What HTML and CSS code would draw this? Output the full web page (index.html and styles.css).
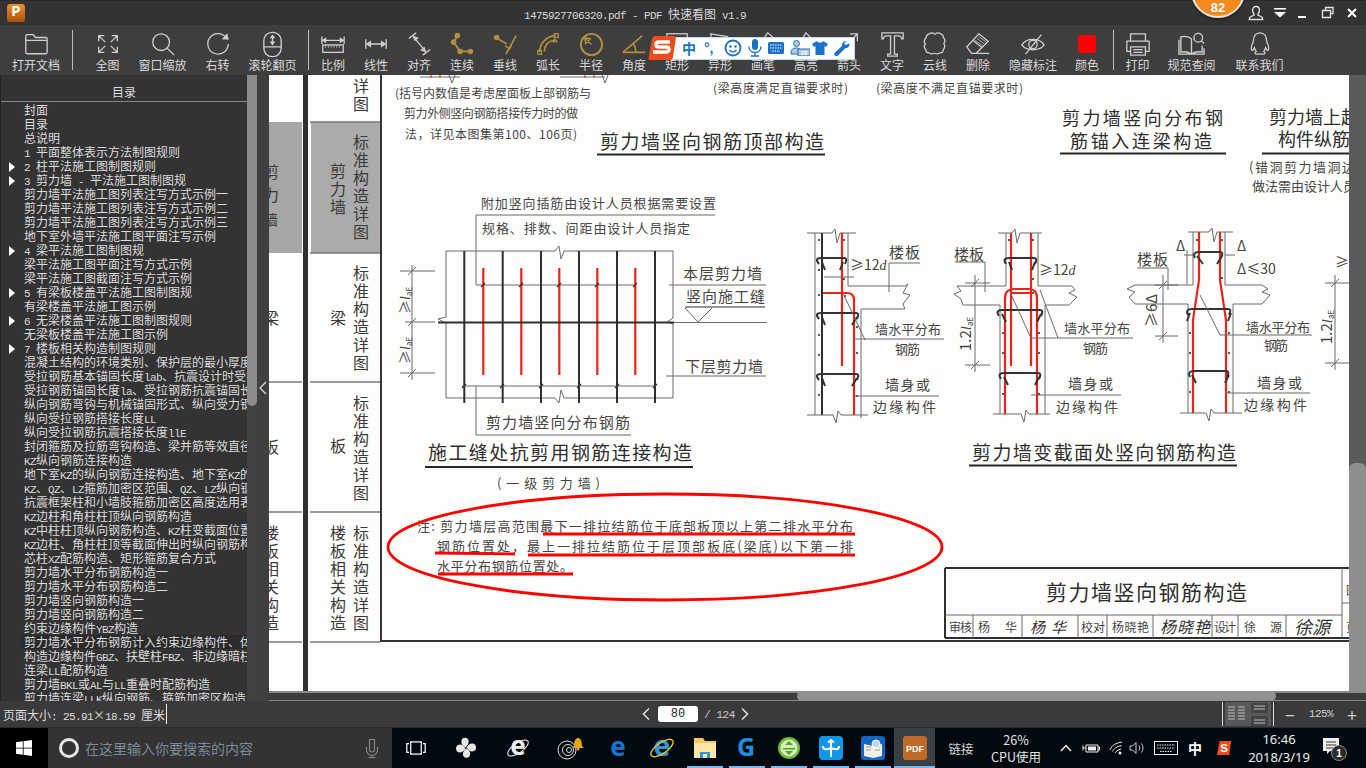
FILE: index.html
```html
<!DOCTYPE html>
<html lang="zh-CN">
<head>
<meta charset="utf-8">
<title>PDF 快速看图</title>
<link rel="stylesheet" href="styles.css">
</head>
<body>
<div class="app">
  <header class="titlebar">
    <div class="logo">P</div>
    <div class="title"><span class="lat">1475927706320.pdf - PDF </span>快速看图<span class="lat"> v1.9</span></div>
    <div class="winctl">
      <svg class="wi wi-user" viewBox="0 0 16 16"><path d="M8 1.500c2.200 0 3.400 1.700 3.400 3.800 0 1.600-.7 2.900-1.500 3.700v1.200l4 1.800c.6.300.8.800.8 2.500H1.300c0-1.700.2-2.200.8-2.500l4-1.800V9C5.300 8.200 4.600 6.900 4.600 5.300 4.600 3.200 5.800 1.500 8 1.500z"/></svg>
      <svg class="wi wi-menu" viewBox="0 0 14 14"><path class="solid" d="M1 2h12v1.500H1zM1 6h12L7 11.500z"/></svg>
      <svg class="wi wi-min" viewBox="0 0 14 14"><path class="solid" d="M2 10h8v2H2z"/></svg>
      <svg class="wi wi-max" viewBox="0 0 14 14"><path d="M4.500 4V1.500h7.500v6H9.500M1.500 4.500h8v7h-8z"/></svg>
      <svg class="wi wi-close" viewBox="0 0 14 14"><path class="bold" d="M3 3l8 8M11 3l-8 8"/></svg>
    </div>
  </header>

  <nav class="toolbar">
    <div class="tool t-open"><svg class="ic" viewBox="0 0 28 28"><path d="M3 8.500V5.500c0-1 .5-1.500 1.500-1.500h6.500l2.500 3h11c1 0 1.500.5 1.500 1.500V23c0 1-.5 1.500-1.500 1.500h-19C3.500 24.500 3 24 3 23zM3 10h23"/></svg><span>打开文档</span></div>
    <i class="sep"></i>
    <div class="group g-first">
      <div class="tool t-55"><svg class="ic" viewBox="0 0 28 28"><path d="M10 5H4v6M4 5l7 7M18 5h6v6M24 5l-7 7M10 23H4v-6M4 23l7-7M18 23h6v-6M24 23l-7-7"/></svg><span>全图</span></div>
      <div class="tool t-55"><svg class="ic" viewBox="0 0 28 28"><circle cx="12" cy="12" r="9"/><path d="M18.500 18.500L26 26"/></svg><span>窗口缩放</span></div>
      <div class="tool t-55"><svg class="ic" viewBox="0 0 28 28"><path d="M23 7.500A11 11 0 1 0 25 14"/><path class="fill" d="M18 9l7.500 .5L24 2.500z"/></svg><span>右转</span></div>
      <div class="tool t-55"><svg class="ic ic-w" viewBox="0 0 28 28"><rect x="5" y="1.500" width="18" height="25" rx="8.500"/><path d="M5 16.500h18M14 5v9"/><path class="fill" d="M11 7.500h6L14 3.500zM11 11h6l-3 4z"/></svg><span>滚轮翻页</span></div>
    </div>
    <i class="sep sep-2"></i>
    <div class="group g-mid">
      <div class="tool"><svg class="ic" viewBox="0 0 28 28"><path d="M2 6v8M26 6v8M3 10h22M3 10l3-2v4zM25 10l-3-2v4z"/><rect x="3" y="15" width="22" height="8"/><path class="thin" d="M6 15v3M9 15v3M12 15v3M15 15v3M18 15v3M21 15v3"/></svg><span>比例</span></div>
      <div class="tool"><svg class="ic" viewBox="0 0 28 28"><path d="M3 9v10M25 9v10M4 14h20M4 14l4-2.500v5zM24 14l-4-2.500v5z"/></svg><span>线性</span></div>
      <div class="tool"><svg class="ic" viewBox="0 0 28 28"><path d="M3 8l8-6M18 26l8-6M8 6l13 16M8 6l4.500 1.500L9.500 10zM21 22l-4.500-1.500L19.500 18z"/></svg><span>对齐</span></div>
      <div class="tool gold"><svg class="ic" viewBox="0 0 28 28"><circle class="fill" cx="5" cy="12" r="3"/><circle class="fill" cx="9" cy="5" r="3"/><circle class="fill" cx="12" cy="22" r="3"/><circle class="fill" cx="23" cy="22" r="3"/><path stroke-width="2" d="M9 5L5 12l7 10h11"/></svg><span>连续</span></div>
      <div class="tool gold"><svg class="ic" viewBox="0 0 28 28"><path stroke-width="1.800" d="M4 7l12 7M26 5L15 25M14 16l5 3 2-4"/><circle class="fill" cx="5" cy="7" r="3"/></svg><span>垂线</span></div>
      <div class="tool gold"><svg class="ic" viewBox="0 0 28 28"><path stroke-width="1.800" d="M5 23C5 13 12 6 22 5M10 22c0-6 4-11 10-12M20 13l1-4 3 3"/><rect x="3" y="21" width="4" height="4"/><rect x="21" y="3" width="4" height="4"/></svg><span>弧长</span></div>
      <div class="tool gold"><svg class="ic ic-w" viewBox="0 0 28 28"><circle cx="14" cy="14" r="11" stroke-width="2"/><path d="M14 14L7 7M7 7l6 1-5 5z"/></svg><span>半径</span></div>
      <div class="tool gold"><svg class="ic" viewBox="0 0 28 28"><path stroke-width="1.800" d="M2 23h24M2 23L23 5M13 13c2 3 3 6 3 10"/></svg><span>角度</span></div>
      <div class="tool"><svg class="ic" viewBox="0 0 28 28"><rect x="3" y="3" width="22" height="18"/></svg><span>矩形</span></div>
      <div class="tool"><svg class="ic" viewBox="0 0 28 28"><path d="M4 3l18 3 3 14-19 2z"/></svg><span>异形</span></div>
      <div class="tool"><svg class="ic" viewBox="0 0 28 28"><path d="M6 24l3-8 10-14 5 4-11 14z"/></svg><span>画笔</span></div>
      <div class="tool"><svg class="ic" viewBox="0 0 28 28"><path d="M14 2l6 6-8 10-5-5z"/></svg><span>高亮</span></div>
      <div class="tool"><svg class="ic" viewBox="0 0 28 28"><path d="M5 23L23 3M15 3h8v8"/></svg><span>箭头</span></div>
      <div class="tool"><svg class="ic ic-w" viewBox="0 0 28 28"><path d="M3 2h22v6h-1.500c-.5-2-1.500-3-3-3H16v19h3v2H9v-2h3V5H7.500c-1.500 0-2.500 1-3 3H3z"/></svg><span>文字</span></div>
      <div class="tool"><svg class="ic" viewBox="0 0 28 28"><path d="M8 3c2-1.500 4-1 6 .5 2-1.500 4-2 6-.5 2 .5 3 2 3 4 2 2 2 4.500.5 6.500 1.500 2 1 4.500-.5 6.500 0 2-1.500 3.500-3.500 3.500-2 1.500-4 1.500-6 .5-2 1-4 1-6-.5-2 0-3.500-1.500-3.500-3.500C2.500 18.500 2 16 3.500 14 2 12 2.500 9 4.500 7 4.500 5 6 3.500 8 3z"/></svg><span>云线</span></div>
      <div class="tool"><svg class="ic" viewBox="0 0 28 28"><path d="M2 17L15 3l10 8-13 13H7zM8.500 10l10 8M13 24h13"/><path class="thin" d="M11 10l8 6M13 8l8 6M15 6l8 6"/></svg><span>删除</span></div>
    </div>
    <div class="tool t-67"><svg class="ic" viewBox="0 0 28 28"><path d="M2 15c5-8 19-8 24 0-5 7-19 7-24 0z"/><circle cx="14" cy="14.500" r="4.500"/><path d="M6 25L23 4"/></svg><span>隐藏标注</span></div>
    <div class="tool t-41"><div class="swatch"></div><span>颜色</span></div>
    <i class="sep sep-3"></i>
    <div class="tool t-48"><svg class="ic" viewBox="0 0 28 28"><path d="M6 11V3h16v8M6 22H2V11h24v11h-4M6 17h16v9H6zM9 20h10M9 23h10"/></svg><span>打印</span></div>
    <div class="tool t-60"><svg class="ic ic-w" viewBox="0 0 28 28"><path d="M14 8c-3-2-7-3-11-2v16c4-1 8 0 11 2 3-2 7-3 11-2V15M14 8v16M1 9v15h26v-6"/><circle cx="21" cy="7" r="4.500"/><path d="M24 10l3 3"/></svg><span>规范查阅</span></div>
    <div class="tool t-76"><svg class="ic" viewBox="0 0 28 28"><path d="M14 2c5 0 7 4 7 8 0 2 1 3 2 6 1 4 0 6-2 4l-1-2c-.5 2-1 3-2 4 2 1 2 3-1 3-2 0-3 0-3-1 0 1-1 1-3 1-3 0-3-2-1-3-1-1-1.500-2-2-4l-1 2c-2 2-3 0-2-4 1-3 2-4 2-6 0-4 2-8 7-8z"/></svg><span>联系我们</span></div>
  </nav>

  <main class="main">
    <aside class="toc">
      <div class="toc-panel">
        <div class="toc-head">目录</div>
        <ul class="toc-list">
          <li>封面</li>
          <li>目录</li>
          <li>总说明</li>
          <li><span class="lat">1 </span>平面整体表示方法制图规则</li>
          <li class="exp"><span class="lat">2 </span>柱平法施工图制图规则</li>
          <li class="exp"><span class="lat">3 </span>剪力墙<span class="lat"> - </span>平法施工图制图规</li>
          <li>剪力墙平法施工图列表注写方式示例一</li>
          <li>剪力墙平法施工图列表注写方式示例二</li>
          <li>剪力墙平法施工图列表注写方式示例三</li>
          <li>地下室外墙平法施工图平面注写示例</li>
          <li class="exp"><span class="lat">4 </span>梁平法施工图制图规</li>
          <li>梁平法施工图平面注写方式示例</li>
          <li>梁平法施工图截面注写方式示例</li>
          <li class="exp"><span class="lat">5 </span>有梁板楼盖平法施工图制图规</li>
          <li>有梁楼盖平法施工图示例</li>
          <li class="exp"><span class="lat">6 </span>无梁楼盖平法施工图制图规则</li>
          <li>无梁板楼盖平法施工图示例</li>
          <li class="exp"><span class="lat">7 </span>楼板相关构造制图规则</li>
          <li>混凝土结构的环境类别、保护层的最小厚度</li>
          <li>受拉钢筋基本锚固长度<span class="lat">lab</span>、抗震设计时受拉钢筋</li>
          <li>受拉钢筋锚固长度<span class="lat">la</span>、受拉钢筋抗震锚固长度</li>
          <li>纵向钢筋弯钩与机械锚固形式、纵向受力钢筋</li>
          <li>纵向受拉钢筋搭接长度<span class="lat">LL</span></li>
          <li>纵向受拉钢筋抗震搭接长度<span class="lat">llE</span></li>
          <li>封闭箍筋及拉筋弯钩构造、梁并筋等效直径</li>
          <li><span class="lat">KZ</span>纵向钢筋连接构造</li>
          <li>地下室<span class="lat">KZ</span>的纵向钢筋连接构造、地下室<span class="lat">KZ</span>的</li>
          <li><span class="lat">KZ</span>、<span class="lat">QZ</span>、<span class="lat">LZ</span>箍筋加密区范围、<span class="lat">QZ</span>、<span class="lat">LZ</span>纵向钢筋</li>
          <li>抗震框架柱和小墙肢箍筋加密区高度选用表</li>
          <li><span class="lat">KZ</span>边柱和角柱柱顶纵向钢筋构造</li>
          <li><span class="lat">KZ</span>中柱柱顶纵向钢筋构造、<span class="lat">KZ</span>柱变截面位置</li>
          <li><span class="lat">KZ</span>边柱、角柱柱顶等截面伸出时纵向钢筋构造</li>
          <li>芯柱<span class="lat">XZ</span>配筋构造、矩形箍筋复合方式</li>
          <li>剪力墙水平分布钢筋构造一</li>
          <li>剪力墙水平分布钢筋构造二</li>
          <li>剪力墙竖向钢筋构造一</li>
          <li>剪力墙竖向钢筋构造二</li>
          <li>约束边缘构件<span class="lat">YBZ</span>构造</li>
          <li class="hover">剪力墙水平分布钢筋计入约束边缘构件、体积</li>
          <li>构造边缘构件<span class="lat">GBZ</span>、扶壁柱<span class="lat">FBZ</span>、非边缘暗柱</li>
          <li>连梁<span class="lat">LL</span>配筋构造</li>
          <li>剪力墙<span class="lat">BKL</span>或<span class="lat">AL</span>与<span class="lat">LL</span>重叠时配筋构造</li>
          <li>剪力墙连梁<span class="lat">LLK</span>纵向钢筋、箍筋加密区构造</li>
        </ul>
      </div>
      <div class="toc-scroll"><div class="toc-thumb"></div></div>
      <div class="toc-gutter"><svg class="chev" viewBox="0 0 8 14"><path d="M7 1L1 7l6 6"/></svg></div>
    </aside>

    <section class="doc">
      <div class="doc-top">
        <svg class="sheet" viewBox="269 75 1080 616" width="1080" height="616">
          <rect x="269" y="75" width="1080" height="616" fill="#fff"/>
          <rect x="308" y="75" width="1041" height="616" fill="#fdfdfc"/>

          <!-- previous page strip -->
          <rect x="269" y="122" width="33" height="131" fill="#a6a6a6"/>
          <path class="ln2" d="M269 382h33M269 512h33M269 642h33"/>
          <text class="v f16" x="271" y="164">剪</text>
          <text class="v f16" x="271" y="187">力</text>
          <text class="v f14" x="271" y="213">墙</text>
          <text class="v f16" x="271" y="310">梁</text>
          <text class="v f16" x="271" y="439">板</text>
          <text class="v f16" x="271" y="525">楼板相关构造</text>
          <rect x="303" y="75" width="5" height="616" fill="#303030"/>

          <!-- section tabs -->
          <rect x="311" y="122" width="69" height="131" fill="#ababab"/>
          <path class="ln2" d="M310 122h70M310 253h70M310 382h70M310 512h70M310 642h70"/>
          <path class="frame" d="M381 75v566h968"/>
          <text class="v f16" x="361" y="78">详图</text>
          <text class="v f16" x="361" y="134">标准构造详图</text>
          <text class="v f16" x="338" y="163">剪力墙</text>
          <text class="v f16" x="361" y="265">标准构造详图</text>
          <text class="v f16" x="338" y="310">梁</text>
          <text class="v f16" x="361" y="395">标准构造详图</text>
          <text class="v f16" x="338" y="438">板</text>
          <text class="v f16" x="361" y="525">标准构造详图</text>
          <text class="v f16" x="338" y="525">楼板相关构造</text>

          <!-- top fragments -->
          <path class="ln" d="M420 77h40M560 77h45M449 75l3 8 3-8M602 75l3 8 3-8"/>
          <path class="red thin" d="M431 75v3M440 75v3M585 75v3M594 75v3"/>
          <text class="f12" x="395" y="98" textLength="196">(括号内数值是考虑屋面板上部钢筋与</text>
          <text class="f12" x="404" y="118" textLength="174">剪力外侧竖向钢筋搭接传力时的做</text>
          <text class="f12" x="405" y="139" textLength="172">法，详见本图集第100、106页)</text>
          <text class="f12" x="713" y="93" textLength="135">(梁高度满足直锚要求时)</text>
          <text class="f12" x="876" y="93" textLength="147">(梁高度不满足直锚要求时)</text>
          <text class="f19" x="600" y="149" textLength="224">剪力墙竖向钢筋顶部构造</text>
          <path class="ul" d="M597 154.500h228"/>
          <text class="f18" x="1062" y="125" textLength="161">剪力墙竖向分布钢</text>
          <text class="f18" x="1070" y="148" textLength="142">筋锚入连梁构造</text>
          <path class="ul" d="M1060 153.500h166"/>
          <text class="f18" x="1269" y="124" textLength="90">剪力墙上起</text>
          <text class="f18" x="1278" y="146" textLength="72">构件纵筋</text>
          <path class="ul" d="M1262 153.500h87"/>
          <text class="f13" x="1249" y="172" textLength="106">(错洞剪力墙洞边</text>
          <text class="f13" x="1252" y="191" textLength="104">做法需由设计人员</text>

          <!-- construction joint drawing -->
          <text class="f13" x="481" y="208" textLength="235">附加竖向插筋由设计人员根据需要设置</text>
          <text class="f13" x="482" y="233" textLength="208">规格、排数、间距由设计人员指定</text>
          <path class="ln" d="M476 215h239M476 215v70h160"/>
          <path class="ln" d="M446 251h109l4-5 2 13 3-8h109v67l-6 4 6 2v74h-109l-3-8-2 13-4-5h-109v-75l-8-4 8-2z"/>
          <path class="blk" d="M464.300 251v152M502.700 251v152M541 251v152M579 251v152M617 251v152M655 251v152"/>
          <path class="red" d="M483.300 268v107M521.300 268v107M559.300 268v107M597.300 268v107M635.300 268v107"/>
          <path class="blk" d="M438 322.500h236"/>
          <path class="ln" d="M462 386h194M476 386v49h155M674 322.500h93"/>
          <path class="blk thin" d="M481 287l4-4M519 287l4-4M557 287l4-4M595 287l4-4M633 287l4-4M462 388l4-4M500 388l4-4M539 388l4-4M577 388l4-4M615 388l4-4M653 388l4-4"/>
          <text class="f15" x="486" y="428" textLength="144">剪力墙竖向分布钢筋</text>
          <text class="f19" x="428" y="460" textLength="264">施工缝处抗剪用钢筋连接构造</text>
          <path class="ul" d="M425 467h268"/>
          <text class="f13" x="497" y="488" textLength="103">(一级剪力墙)</text>
          <text class="f15" x="683" y="279" textLength="79">本层剪力墙</text>
          <path class="ln" d="M669 285h97"/>
          <text class="f15" x="686" y="302" textLength="79">竖向施工缝</text>
          <path class="blk thin" d="M685 307h80"/>
          <path class="ln" d="M685 308l13 14 14-14"/>
          <text class="f15" x="685" y="372" textLength="78">下层剪力墙</text>
          <path class="ln" d="M666 376h100"/>
          <path class="ln" d="M412 265v115M400 271h35M405 322h30M400 373h35M408 275l8-8M408 326l8-8M408 377l8-8"/>
          <text class="f14 rot" transform="rotate(-90 410 314)" x="410" y="314">≥<tspan class="it">l</tspan><tspan class="sub" dy="2">aE</tspan></text>
          <text class="f14 rot" transform="rotate(-90 410 364)" x="410" y="364">≥<tspan class="it">l</tspan><tspan class="sub" dy="2">aE</tspan></text>

          <!-- section 1 -->
          <path class="ln" d="M807 233h25l3-4 2 14 3-10h16M815 233v182M848 233v53h57l3-2-5 9 7 2-7 9 2 5h-44v109M807 415h26l3 8 2-12 3 4h27"/>
          <path class="blk" d="M822 233v182"/>
          <path class="red" d="M842 233v133M823 293h24q7 0 7 7v115"/>
          <path class="stir" d="M819 264q-5-6 2-6h23q4 0 1 6M822 262l3 8M843 262l-3 8M819 319q-5-6 2-6h35q4 0 1 6M822 317l3 8M857 317l-5 8M819 380q-5-6 2-6h35q4 0 1 6M822 378l3 8M857 378l-5 8"/>
          <g class="dots"><circle cx="819" cy="240" r="1"/><circle cx="819" cy="270" r="1"/><circle cx="819" cy="295" r="1"/><circle cx="819" cy="335" r="1"/><circle cx="819" cy="355" r="1"/><circle cx="819" cy="395" r="1"/><circle cx="844" cy="240" r="1"/><circle cx="844" cy="279" r="1"/><circle cx="845" cy="296" r="1"/><circle cx="857" cy="327" r="1"/><circle cx="857" cy="353" r="1"/><circle cx="857" cy="396" r="1"/></g>
          <path class="ln" d="M824 277h30M843 293l22 47M853 339h91M855 396h84M889 263h31M889 263v29"/>
          <text class="f14" x="850" y="270">≥12<tspan class="it">d</tspan></text>
          <text class="f15" x="889" y="258" textLength="31">楼板</text>
          <text class="f13" x="875" y="334" textLength="66">墙水平分布</text>
          <text class="f13" x="895" y="354" textLength="25">钢筋</text>
          <text class="f14" x="885" y="390" textLength="45">墙身或</text>
          <text class="f14" x="873" y="412" textLength="63">边缘构件</text>

          <!-- section 2 -->
          <path class="ln" d="M998 233h14l3-4 2 14 3-10h22M1006 233v53h-49l4 5-7 3 7 5 2 6h37v109M1038 233v53h34l3 4-6 3 8 4-8 8h-24v109M993 414h28l3 8 2-12 3 4h21"/>
          <path class="red" d="M1011 233v133M1031 233v133M1005 414V298q0-9 9-9h15q8 0 8 9v116M1010 293h24"/>
          <path class="stir" d="M1006 264q-4-6 3-6h25q4 0 1 6M1009 262l3 8M1035 262l-3 8M999 316q-4-6 3-6h38q4 0 1 6M1002 314l4 8M1041 314l-4 8M1001 379q-4-6 3-6h34q4 0 1 6M1004 377l4 8M1039 377l-4 8"/>
          <g class="dots"><circle cx="1033" cy="240" r="1"/><circle cx="1009" cy="240" r="1"/><circle cx="1033" cy="279" r="1"/><circle cx="1003" cy="333" r="1"/><circle cx="1003" cy="353" r="1"/><circle cx="1003" cy="394" r="1"/><circle cx="1039" cy="333" r="1"/><circle cx="1039" cy="353" r="1"/><circle cx="1039" cy="394" r="1"/></g>
          <path class="ln" d="M955 262h30v30M1010 292l20 44M1040 290l18 48M1030 338h103M1031 395h90M975 275v97M965 283h25M965 365h25M971 287l8-8M971 369l8-8"/>
          <text class="f15" x="954" y="260" textLength="30">楼板</text>
          <text class="f14" x="1039" y="275">≥12<tspan class="it">d</tspan></text>
          <text class="f15 rot" transform="rotate(-90 971 351)" x="971" y="351">1.2<tspan class="it">l</tspan><tspan class="sub" dy="2">aE</tspan></text>
          <text class="f13" x="1064" y="333" textLength="66">墙水平分布</text>
          <text class="f13" x="1083" y="353" textLength="25">钢筋</text>
          <text class="f14" x="1068" y="389" textLength="45">墙身或</text>
          <text class="f14" x="1056" y="412" textLength="62">边缘构件</text>

          <!-- section 3 -->
          <path class="ln" d="M1188 232h21l3-4 2 14 3-10h16M1193 232v53h-58l-8 4 8 3-6 5 6 7h53v109M1225 232v53h37l6 4-6 3 8 3-8 9h-29v109M1180 413h26l3 8 2-12 3 4h28"/>
          <path class="red" d="M1199 232v48l-6 40v93M1220 232v48l6 40v93"/>
          <path class="stir" d="M1195 258q-3-6 4-6h21q4 0 1 6M1197 256l6 8M1222 256l-5 8M1188 315q-3-6 4-6h36q4 0 1 6M1190 313l-3 8M1231 313l-3 8M1190 377q-3-6 4-6h32q4 0 1 6M1192 375l4 8M1229 375l-4 8"/>
          <g class="dots"><circle cx="1190" cy="333" r="1"/><circle cx="1190" cy="353" r="1"/><circle cx="1190" cy="392" r="1"/><circle cx="1229" cy="333" r="1"/><circle cx="1229" cy="353" r="1"/><circle cx="1229" cy="392" r="1"/><circle cx="1222" cy="240" r="1"/><circle cx="1197" cy="240" r="1"/><circle cx="1222" cy="278" r="1"/></g>
          <path class="ln" d="M1137 268h31v22M1163 275v68M1155 285h23M1155 336h23M1187 250v34M1193 255h-9M1225 255h10M1200 295l20 40M1220 335h92M1225 393h85M1159 340l8-8M1159 289l8-8"/>
          <text class="f15" x="1137" y="265" textLength="31">楼板</text>
          <text class="f14" x="1176" y="251">Δ</text>
          <text class="f14" x="1237" y="251">Δ</text>
          <text class="f14" x="1237" y="274">Δ≤30</text>
          <text class="f15 rot" transform="rotate(-90 1157 327)" x="1157" y="327">≥6Δ</text>
          <text class="f13" x="1246" y="332" textLength="64">墙水平分布</text>
          <text class="f13" x="1264" y="350" textLength="24">钢筋</text>
          <text class="f14" x="1257" y="388" textLength="45">墙身或</text>
          <text class="f14" x="1244" y="410" textLength="63">边缘构件</text>

          <!-- section 4 fragment -->
          <path class="ln" d="M1335 275v95M1325 283h24M1325 363h24M1331 287l8-8M1331 367l8-8"/>
          <text class="f14" x="1335" y="267">≥12</text>
          <text class="f15 rot" transform="rotate(-90 1332 344)" x="1332" y="344">1.2<tspan class="it">l</tspan><tspan class="sub" dy="2">aE</tspan></text>

          <text class="f19" x="972" y="460" textLength="264">剪力墙变截面处竖向钢筋构造</text>
          <path class="ul" d="M969 465.500h268"/>

          <!-- note -->
          <text class="f13" x="417" y="531" textLength="436">注: 剪力墙层高范围最下一排拉结筋位于底部板顶以上第二排水平分布</text>
          <text class="f13" x="437" y="551" textLength="416">钢筋位置处，最上一排拉结筋位于层顶部板底(梁底)以下第一排</text>
          <text class="f13" x="437" y="571" textLength="136">水平分布钢筋位置处。</text>
          <path class="mark" d="M543 534h312M435 553l80 1M528 555h327M438 574h135"/>
          <ellipse class="mark" cx="665" cy="547" rx="277" ry="53"/>

          <!-- title block -->
          <path class="blk" d="M945 568h404M945 568v70M945 638h404"/>
          <path class="ln" d="M945 615h397M973 615v23M1022 615v23M1078 615v23M1107 615v23M1153 615v23M1212 615v23M1238 615v23M1286 615v23M1342 568v70M1342 603h7"/>
          <text class="f21" x="1046" y="600" textLength="201">剪力墙竖向钢筋构造</text>
          <text class="f12" x="949" y="632" textLength="23">审核</text>
          <text class="f12" x="978" y="632" textLength="39">杨  华</text>
          <text class="f15 sig" x="1030" y="633" textLength="36">杨华</text>
          <text class="f12" x="1081" y="632" textLength="24">校对</text>
          <text class="f12" x="1112" y="632" textLength="37">杨晓艳</text>
          <text class="f16 sig" x="1160" y="633" textLength="50">杨晓艳</text>
          <text class="f12" x="1214" y="632" textLength="22">设计</text>
          <text class="f12" x="1244" y="632" textLength="38">徐  源</text>
          <text class="f18 sig" x="1294" y="634" textLength="36">徐源</text>
          <text class="f12" x="1346" y="595">图集号</text>
          <text class="f12" x="1346" y="632">页</text>
        </svg>
        <div class="vscroll"><div class="vs-space"></div><div class="vs-thumb"></div></div>
      </div>
      <div class="hscroll"><div class="hs-space"></div><div class="hs-thumb"></div></div>
    </section>
  </main>

  <footer class="status">
    <div class="size">页面大小<span class="lat">: 25.91</span><span class="times">×</span><span class="lat">18.59 </span>厘米</div>
    <i class="caret"></i>
    <div class="pager">
      <svg class="pg" viewBox="0 0 8 14"><path d="M7 1.500L1.500 7 7 12.500"/></svg>
      <div class="pageno">80</div>
      <span class="total">/ 124</span>
      <svg class="pg" viewBox="0 0 8 14"><path d="M1 1.500L6.500 7 1 12.500"/></svg>
    </div>
    <div class="views">
      <svg viewBox="0 0 46 24" width="46" height="24"><rect width="46" height="24" fill="#585858"/><path d="M3 5h7M3 8h7M3 11h7M3 14h7M3 17h7M13 5h7M13 8h7M13 11h7M13 14h7M13 17h7" stroke="#bdbdbd"/><rect x="26" y="1" width="17" height="10" fill="#444"/><rect x="26" y="14" width="17" height="10" fill="#444"/><path d="M29 4h11M29 7h11M29 18h11M29 21h11" stroke="#bdbdbd"/></svg>
    </div>
    <div class="zoom"><span class="zb">−</span><span class="zv">125%</span><span class="zb">+</span></div>
  </footer>

  <div class="taskbar">
    <div class="start"><svg viewBox="0 0 16 16" width="16" height="16"><path fill="#fff" d="M0 2.300l6.800-1v6.400H0zM7.600 1.200L16 0v7.700H7.600zM0 8.500h6.800v6.300L0 13.700zM7.600 8.500H16V16l-8.400-1.200z"/></svg></div>
    <div class="search">
      <i class="ring"></i>
      <span class="stext">在这里输入你要搜索的内容</span>
      <svg class="mic" viewBox="0 0 14 20"><path d="M4.500 1.500h5v10a2.500 2.500 0 0 1-5 0zM1.500 9v3a5.500 5.500 0 0 0 11 0V9M7 17.500v2M3.500 19.500h7"/></svg>
    </div>
    <div class="tasks">
      <div class="tb w48"><svg viewBox="0 0 24 16" width="22" height="14"><path fill="none" stroke="#fff" stroke-width="1.400" d="M6 1h12v14H6zM4 3H1.500v10H4M20 3h2.500v10H20"/></svg></div>
      <div class="tb w52"><svg viewBox="0 0 24 24" width="24" height="24"><g fill="#e6e6e6"><path d="M11.500 11.500C8 10 6 6 8.500 2.500c3-2 7 0 6 4-.5 2-1.500 3.500-3 5z"/><path d="M12.500 11.500c2-3.500 5.500-5 8.500-3 2 3 1 7-3 7-2 0-3.500-1.500-5.500-4z"/><path d="M12.500 12.500c3 1.500 5 5 2.500 8.500-3 2-7 0-6-4 .5-2 1.500-3 3.500-4.500z"/><path d="M11.500 12.500C9.500 16 6 17.500 3 15.500c-2-3-1-7 3-7 2 0 3.500 1.500 5.500 4z"/></g></svg></div>
      <div class="tb w52"><svg viewBox="0 0 24 24" width="24" height="24"><text class="tlogo" x="12" y="19" fill="#eee">e</text><ellipse cx="12" cy="12" rx="12" ry="5" transform="rotate(-35 12 12)" fill="none" stroke="#eee"/></svg></div>
      <div class="tb w52"><svg viewBox="0 0 28 26" width="28" height="26"><g fill="none" stroke="#ddd"><circle cx="11" cy="15" r="9"/><circle cx="12" cy="15" r="5.500"/><circle cx="13" cy="15" r="2.500"/></g><path fill="#e8a317" d="M18 11c0-4 1-8 4-8s4 4 4 8l2 2H16z"/><circle cx="22" cy="14" r="1.500" fill="#e8a317"/></svg></div>
      <div class="tb w44"><svg viewBox="0 0 24 24" width="24" height="24"><text class="tlogo" x="12" y="20" fill="#0f78d4">e</text></svg></div>
      <div class="tb w44"><svg viewBox="0 0 24 24" width="26" height="26"><text class="tlogo" x="12" y="19" fill="#2a96dc">e</text><ellipse cx="12" cy="12" rx="12" ry="5" transform="rotate(-35 12 12)" fill="none" stroke="#e8c02a" stroke-width="1.300"/></svg></div>
      <div class="tb w42 open"><svg viewBox="0 0 24 22" width="24" height="22"><path fill="#f1c962" d="M1 1h9l2 3h11v17H1z"/><path fill="#fbe7a3" d="M1 6h22v15H1z"/><path fill="#2d9ad6" d="M7 15h10v6H7z"/><path fill="#fbe7a3" d="M10 17h4v4h-4z"/></svg></div>
      <div class="tb w42 open"><svg viewBox="0 0 24 24" width="24" height="24"><text class="tlogo g" x="11" y="20" fill="#1d8fe1">G</text></svg></div>
      <div class="tb w42 open"><svg viewBox="0 0 24 24" width="24" height="24"><circle cx="12" cy="12" r="11" fill="#69bd2f"/><circle cx="12" cy="12" r="8.500" fill="#d8f0bf"/><path fill="#4fa41c" d="M12 5l4 4H8zM6 12h12v1.500H6zM8 15h8l-4 4z"/></svg></div>
      <div class="tb w42 open"><svg viewBox="0 0 24 24" width="24" height="24"><rect width="24" height="24" rx="4" fill="#1296e8"/><path fill="none" stroke="#fff" stroke-width="2" d="M12 4v17M9 6.500L12 4l3 2.500M4 10c0 4 3 4 8 2 5 2 8 2 8-2"/></svg></div>
      <div class="tb w42 open"><svg viewBox="0 0 24 24" width="24" height="24"><rect width="24" height="24" rx="3" fill="#1266c4"/><path fill="#f3efe0" d="M3 8l9 2 9-2v12l-9 2-9-2z"/><path stroke="#9a9a9a" d="M5 11h5M5 14h5M14 11h5M14 14h5"/><circle cx="15" cy="8" r="4" fill="#bcd8f2" stroke="#fff"/></svg></div>
      <div class="tb w41 open active"><svg viewBox="0 0 24 24" width="24" height="24"><rect width="24" height="24" rx="3" fill="#c06a2a"/><text class="pdfl" x="12" y="16" fill="#fff">PDF</text></svg></div>
    </div>
    <div class="tray">
      <div class="link">链接</div>
      <div class="cpu"><span>26%</span><span>CPU使用</span></div>
      <svg class="ti m-caret" viewBox="0 0 12 8" width="12" height="8"><path d="M1 7l5-5.500L11 7"/></svg>
      <svg class="ti m-batt" viewBox="0 0 18 12" width="18" height="12"><path d="M4 3h12v7H4zM4 6H1M1 3.500v5M16 5h1.500v3H16"/><path class="tfill" d="M6 4.500h8v4H6z"/></svg>
      <svg class="ti m-wifi" viewBox="0 0 14 14" width="14" height="14"><path d="M1 9c2-5 6-7 12-8M3.500 10.500c1.500-3 4-5 9-6M6 12c1-2 3-3 6-4"/><circle class="tfill" cx="11" cy="12" r="1.500"/></svg>
      <svg class="ti m-vol" viewBox="0 0 16 14" width="16" height="14"><path d="M1 5h2.500L7 1.500v11L3.500 9H1zM10 4.500c1 1.500 1 3.500 0 5M12.500 2.500c2 3 2 6 0 9"/></svg>
      <svg class="ti m-key" viewBox="0 0 24 14" width="24" height="14"><rect x=".5" y=".5" width="23" height="13" fill="none"/><path class="dash" d="M3 4h18M3 7h18M6 10.500h12"/></svg>
      <span class="ime">中</span>
      <svg class="ti m-s" viewBox="0 0 18 18" width="16" height="16"><path class="slogo" d="M4 1h13l-2 16H1z"/><text class="stx" x="9" y="14">S</text></svg>
      <div class="clock"><span>16:46</span><span>2018/3/19</span></div>
      <svg class="ti m-note" viewBox="0 0 26 28" width="26" height="28"><path class="tfill2" d="M2 4h16v13H9l-3 3v-3H2z"/><path class="lines" d="M5 8h10M5 11h10M5 14h7"/><circle cx="18" cy="19" r="7.500" fill="#2b2b2b" stroke="#888" stroke-width="1"/><text class="nb" x="18" y="23">1</text></svg>
    </div>
  </div>

  <svg class="badge" viewBox="0 0 56 22" width="56" height="22"><defs><filter id="sh"><feDropShadow dx="0" dy="1" stdDeviation="1.500" flood-color="#000" flood-opacity=".6"/></filter></defs><circle cx="28" cy="-9" r="26" fill="#f48a1e" stroke="#e8e2da" stroke-width="2" filter="url(#sh)"/><text x="28" y="12" class="bnum">82</text></svg>

  <div class="ime-bar">
    <svg class="ime-s" viewBox="0 0 28 24" width="28" height="24"><path fill="#ea4e1c" d="M7 0h20q1 0 1 1l-3 20q-.5 3-3 3H2q-2 0-1.500-2L4 3q.5-3 3-3z"/><path fill="none" stroke="#fff" stroke-width="3.500" d="M22 6H11q-3 0-3 2.500T11 11h7q3 0 3 2.500T17 16H5"/></svg>
    <div class="ime-items">
      <span class="z">中</span>
      <span class="p">°,</span>
      <svg viewBox="0 0 18 18" width="18" height="18"><circle cx="9" cy="9" r="7.500" fill="none" stroke-width="1.800"/><circle cx="6.500" cy="7.500" r="1.200" class="b"/><circle cx="11.500" cy="7.500" r="1.200" class="b"/><path d="M5.500 11c2 2.500 5 2.500 7 0" fill="none" stroke-width="1.400"/></svg>
      <svg viewBox="0 0 14 18" width="14" height="18"><rect x="4" y="0" width="6" height="11" rx="3" class="b"/><path d="M1 7.500c0 8 12 8 12 0M7 13.500V17M3 17h8" fill="none" stroke-width="1.400"/></svg>
      <svg viewBox="0 0 16 12" width="16" height="12"><rect width="16" height="12" rx="1.500" class="b"/><path stroke="#fff" d="M2 3h12M2 6h12M4 9h8" stroke-dasharray="1.500 1"/></svg>
      <svg viewBox="0 0 20 16" width="20" height="16"><circle cx="6.500" cy="3.500" r="3" fill="#b4c6d8"/><path fill="#b4c6d8" d="M1 14c0-5 2-6 5.500-6 2 0 3 1 4 1.500V14z"/><rect x="8" y="9" width="12" height="7" fill="#b4c6d8"/><text class="t22" x="14" y="15">22</text></svg>
      <svg class="shirt" viewBox="0 0 16 14" width="16" height="14"><path class="b" d="M5 0L0 3l2 3 1.500-1v9h9V5L14 6l2-3-5-3c-.5 2-5 2-6 0z"/></svg>
      <svg viewBox="0 0 16 16" width="16" height="16"><path class="b" d="M15.500 3.500c.5 2-1 5-4 4.500L4 15.500c-1 .8-3 .8-3.500-.5-.5-1 0-2 .5-2.500L8 6c-.5-3 2-5 4.500-5L10 3.500 11.500 5z"/></svg>
    </div>
  </div>
</div>
</body>
</html>
```
FILE: styles.css
```css
*{box-sizing:border-box;margin:0;padding:0}
html,body{width:1366px;height:768px;overflow:hidden;background:#000}
body{font-family:"Noto Sans CJK SC","Liberation Sans",sans-serif;font-size:12px;color:#ddd}
i{display:block}
.lat{font-family:"Liberation Mono","Noto Sans CJK SC",monospace;font-size:11px;letter-spacing:-.6px;white-space:pre}
.times{display:inline-block;width:12px;text-align:center}
.app{position:relative;width:1366px;height:768px;display:flex;flex-direction:column;overflow:hidden}

.titlebar{height:25px;background:#333;display:flex;align-items:center;padding-left:7px;border-top:1px solid #2a2a2a;flex:none}
.logo{width:18px;height:18px;border-radius:3px;background:linear-gradient(180deg,#ee8f2a,#a8520e);color:#fff;font:bold 15px/18px "Liberation Mono",monospace;text-align:center;flex:none}
.title{margin-left:499px;font-size:12px;color:#d8d8d8;white-space:nowrap;width:724px;flex:none}
.winctl{display:flex;align-items:center}
.wi{width:14px;height:14px;fill:none;stroke:#e6e6e6;stroke-width:1.300;flex:none}
.wi .solid{fill:#fff;stroke:none}
.wi .bold{stroke:#fff;stroke-width:2}
.wi-user{width:16px;height:16px}
.wi-menu{margin-left:9px}
.wi-min{margin-left:9px}
.wi-max{margin-left:11px}
.wi-close{margin-left:10px}

.toolbar{height:50px;background:#3e3e3e;display:flex;align-items:center;flex:none}
.tool{flex:none;width:43px;height:46px;display:flex;flex-direction:column;align-items:center;color:#cfcfcf;white-space:nowrap;padding-top:4px}
.tool span{font-size:12px;line-height:15px;color:#d9d9d9}
.ic{width:26px;height:26px;flex:none;fill:none;stroke:currentColor;stroke-width:1.400}
.ic-w{width:27px;height:27px;margin-bottom:-1px}
.ic .fill{fill:currentColor;stroke:none}
.ic .thin{stroke-width:.8}
.gold{color:#b08f3e}
.t-open{width:72px}
.t-55{width:55px}
.t-67{width:67px}
.t-41{width:41px}
.t-48{width:48px}
.t-60{width:60px}
.t-76{width:76px}
.sep{width:1px;height:40px;background:#bdbdbd;flex:none}
.sep-2{margin-left:8px}
.sep-3{margin-left:5px}
.group{display:flex;flex:none}
.g-first{margin-left:7px}
.g-mid{margin-left:2.500px}
.swatch{width:18px;height:18px;margin:4px 0;background:#f00;border-radius:3px}

.main{flex:none;height:626px;display:flex;background:#3f3f3f}
.toc{width:269px;flex:none;display:flex;height:100%}
.toc-panel{width:247px;background:#333;overflow:hidden;border-left:1px solid #232323}
.toc-head{height:27px;padding-top:8px;line-height:18px;text-align:center;font-size:12px;color:#ddd;border-bottom:1px solid #858585}
.toc-list{list-style:none;padding-top:1px}
.toc-list li{height:14px;line-height:14px;padding-left:23px;font-size:12px;white-space:nowrap;color:#dcdcdc;margin-right:-120px}
.toc-list li.hover{background:#2a2a2a;margin-left:20px;padding-left:3px}
.toc-list li.exp::before{content:"";display:inline-block;width:0;height:0;margin-left:-15px;margin-right:9px;border-left:6px solid #fff;border-top:5px solid transparent;border-bottom:5px solid transparent;vertical-align:-1px}
.toc-scroll{width:10px;flex:none;background:#424242}
.toc-thumb{height:331px;background:#8c8c8c;border-radius:0 0 5px 5px}
.toc-gutter{width:12px;flex:none;background:#3f3f3f;display:flex;align-items:center;justify-content:center}
.chev{width:8px;height:14px;fill:none;stroke:#ddd;stroke-width:1.300}

.doc{width:1097px;flex:none;display:flex;flex-direction:column}
.doc-top{height:616px;display:flex;flex:none}
.sheet{display:block;flex:none}
.vscroll{width:17px;flex:none;background:#5a5a5a}
.vs-space{height:388px}
.vs-thumb{height:228px;background:#8e8e8e;border-radius:6px 6px 0 0}
.hscroll{height:10px;flex:none;display:flex;background:#3c3c3c;border-top:2px solid #8a8a8a;border-bottom:1px solid #8a8a8a}
.hs-space{width:528px;flex:none}
.hs-thumb{width:479px;height:10px;margin-top:-2px;background:#919191;border-radius:5px}

.sheet text{font-family:"Noto Sans CJK SC","Liberation Serif",sans-serif;fill:#454545;font-weight:400}
.f11{font-size:11px}.f12{font-size:12px}.f13{font-size:13px}.f14{font-size:14px}.f15{font-size:15px}.f16{font-size:16px}.f18{font-size:18px}.f19{font-size:19px}.f21{font-size:21px}
.sheet text.f19,.sheet text.f18,.sheet text.f21{font-weight:400;fill:#2e2e2e}
.sheet text.v{writing-mode:vertical-rl;letter-spacing:2px;font-weight:400;fill:#3a3a3a}
.sheet .it{font-style:italic;font-family:"Liberation Serif",serif}
.sheet .sub{font-size:8px}
.sheet text.sig{font-style:italic;fill:#333}
.sheet path,.sheet ellipse{fill:none}
.ln{stroke:#6b6b6b;stroke-width:1}
.ln2{stroke:#7a7a7a;stroke-width:1.500}
.frame{stroke:#333;stroke-width:2}
.blk{stroke:#2f2f2f;stroke-width:2}
.blk.thin{stroke-width:1.200}
.red{stroke:#e6251f;stroke-width:2.200}
.red.thin{stroke-width:1}
.ul{stroke:#262626;stroke-width:2}
.stir{stroke:#333;stroke-width:2}
.dots circle{fill:#222}
.mark{stroke:#f00;stroke-width:2.800}

.status{height:27px;flex:none;background:#3a3a3a;display:flex;align-items:center;padding-left:3px;border-bottom:1px solid #2a2a2a}
.size{font-size:12px;color:#ddd;white-space:nowrap;width:163px;flex:none}
.caret{width:1px;height:20px;background:#eee;flex:none}
.pager{display:flex;align-items:center;margin-left:475px;width:110px;flex:none}
.pg{width:8px;height:14px;fill:none;stroke:#ddd;stroke-width:1.600;flex:none}
.pageno{width:40px;height:16px;margin-left:8px;background:#fff;color:#222;border-radius:3px;text-align:center;font:12px/16px "Liberation Mono",monospace;flex:none}
.total{margin-left:6px;width:37px;font:11.500px "Liberation Mono",monospace;letter-spacing:-.8px;color:#c8c8c8;flex:none}
.views{margin-left:470px;flex:none;height:24px;border-left:1px solid #ddd;border-right:1px solid #ddd;width:52px;display:flex;justify-content:center}
.zoom{display:flex;align-items:center;margin-left:7px;color:#cfcfcf;flex:none}
.zb{font-size:17px;width:18px;text-align:center}
.zv{font:11px "Liberation Mono",monospace;letter-spacing:-.5px;width:44px;text-align:center}

.taskbar{height:40px;flex:none;display:flex;background:#020a0f}
.start{width:48px;flex:none;background:#000;display:flex;align-items:center;justify-content:center}
.search{width:344px;flex:none;background:#333;display:flex;align-items:center;padding-left:11px}
.ring{width:20px;height:20px;border-radius:50%;border:3px solid #e8e8e8;flex:none}
.stext{margin-left:6px;font-size:14px;color:#7d8a95;white-space:nowrap}
.mic{width:14px;height:20px;fill:none;stroke:#8a8a8a;stroke-width:1.100;margin-left:auto;margin-right:13px;flex:none}
.tasks{display:flex;flex:none;width:544px}
.tb{position:relative;height:40px;flex:none;display:flex;align-items:center;justify-content:center}
.w48{width:48px}.w52{width:52px}.w44{width:44px}.w42{width:42px}.w41{width:41px}
.tb.open::after{content:"";position:absolute;left:3px;right:3px;bottom:0;height:2px;background:#76b9ed}
.tb.active{background:#394045}
.tb.active::after{left:0;right:0}
.tlogo{font:bold 26px "Noto Sans","Liberation Sans",sans-serif;text-anchor:middle}
.tlogo.g{font-size:25px}
.pdfl{font:bold 9px "Liberation Sans",sans-serif;text-anchor:middle}

.tray{display:flex;align-items:center;flex:1;color:#eee}
.link{width:50px;text-align:center;font-size:12.500px;color:#d6d6d6;flex:none}
.cpu{width:60px;display:flex;flex-direction:column;align-items:center;font-size:12.500px;line-height:17px;color:#e4e4e4;flex:none}
.ti{flex:none;fill:none;stroke:#eee;stroke-width:1}
.tfill{fill:#eee;stroke:none}
.tfill2{fill:#eee;stroke:none}
.lines{stroke:#333}
.dash{stroke-dasharray:1.500 1}
.m-caret{margin-left:14px;stroke-width:1.400}
.m-batt{margin-left:10px}
.m-wifi{margin-left:9px}
.m-vol{margin-left:6px;stroke:#ccc}
.m-key{margin-left:9px}
.ime{margin-left:10px;width:14px;font-size:14px;font-weight:700;color:#fff;flex:none;line-height:16px}
.m-s{margin-left:14px;stroke:none}
.slogo{fill:#ea4e1c;stroke:none}
.stx{font:bold 13px "Liberation Sans",sans-serif;fill:#fff;stroke:none;text-anchor:middle}
.clock{margin-left:14px;width:66px;display:flex;flex-direction:column;align-items:center;font:13px/18px "Noto Sans",sans-serif;color:#eee;flex:none}
.m-note{margin-left:9px;stroke:none}
.nb{font:bold 10px "Liberation Sans",sans-serif;fill:#fff;text-anchor:middle;stroke:none}

.badge{position:absolute;left:1190px;top:0}
.bnum{font:bold 13px "Liberation Sans",sans-serif;fill:#fff;text-anchor:middle}

.ime-bar{position:absolute;left:648px;top:36px;height:24px;display:flex;align-items:center}
.ime-s{flex:none;position:relative;z-index:1}
.ime-items{margin-left:-6px;width:185px;height:23px;background:#fff;border:1px solid #c2d8ec;display:flex;align-items:center;gap:6px;padding:0 2px 0 11px}
.ime-items svg{fill:none;stroke:#1a72c8;flex:none}
.ime-items svg .b{fill:#1a72c8;stroke:none}
.ime-items .z{color:#1a72c8;font-weight:700;font-size:14px;line-height:16px;margin-right:2px;width:14px;flex:none}
.ime-items .p{color:#1a72c8;font:bold 14px "Liberation Sans",sans-serif;width:14px;flex:none}
.ime-items .shirt{margin-left:-4px}
.t22{font:bold 6px "Liberation Sans",sans-serif;fill:#fff;stroke:none;text-anchor:middle}
```
